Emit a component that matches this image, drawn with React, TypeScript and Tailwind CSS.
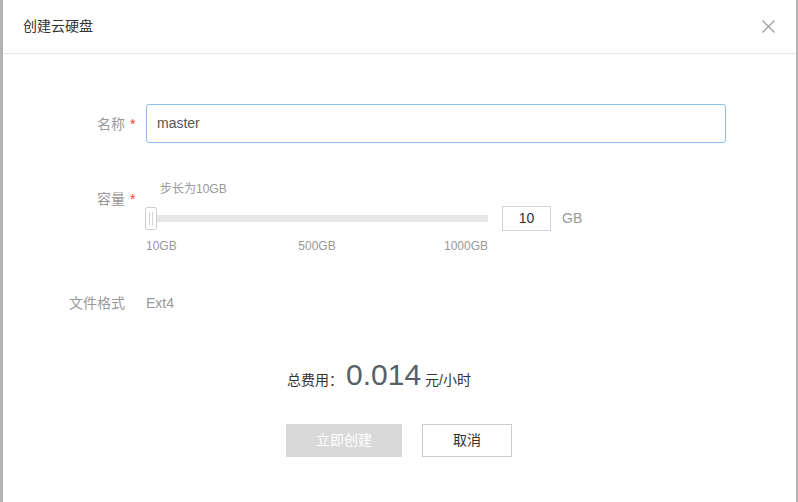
import React from "react";

const FONT = { fontFamily: '"Liberation Sans", "Noto Sans CJK SC", sans-serif' };

export default function App() {
  return (
    <div className="w-[798px] h-[502px] bg-[#b3b3b3] flex pl-[3px] pr-[2px] overflow-hidden" style={FONT}>
      <div className="flex-1 bg-white flex flex-col">
        {/* Header */}
        <div className="h-[54px] border-b border-[#e3e7ed] flex items-center justify-between pl-[20px] pr-[21px] shrink-0">
          <span className="text-[14px] text-[#333]">创建云硬盘</span>
          <svg width="13" height="13" viewBox="0 0 13 13" className="block">
            <path d="M0.5 0.5 L12.5 12.5 M12.5 0.5 L0.5 12.5" stroke="#9a9a9a" strokeWidth="1.2" fill="none" />
          </svg>
        </div>

        {/* Body */}
        <div className="flex flex-col pt-[50px]">
          {/* Name row */}
          <div className="flex items-center">
            <div className="w-[122px] text-right text-[14px] text-[#999] leading-[20px]">名称</div>
            <div className="w-[21px] pl-[5px] text-[14px] text-[#ff3b30] leading-[20px]">*</div>
            <div className="w-[580px] h-[39px] border border-[#8dbdeb] rounded-[3px] flex items-center pl-[10px] text-[14px] text-[#555]">
              master
            </div>
          </div>

          {/* Capacity row */}
          <div className="flex mt-[39px]">
            <div className="w-[122px] text-right text-[14px] text-[#999] leading-[20px] pt-[7px]">容量</div>
            <div className="w-[21px] pl-[5px] text-[14px] text-[#ff3b30] leading-[20px] pt-[7px]">*</div>
            <div className="flex flex-col">
              <div className="text-[12px] leading-[14px] text-[#999] pl-[14px]">步长为10GB</div>
              <div className="flex items-center mt-[10px] h-[25px]">
                <div className="relative w-[342px] h-[25px] flex items-center">
                  <div className="w-full h-[7px] bg-[#e6e6e6]" />
                  <div className="absolute left-[-1px] top-[1px] w-[12px] h-[23px] bg-white border border-[#cfcfcf] rounded-[2px] flex items-center justify-center gap-[2px]">
                    <div className="w-[1px] h-[13px] bg-[#d4d4d4]" />
                    <div className="w-[1px] h-[13px] bg-[#d4d4d4]" />
                  </div>
                </div>
                <div className="ml-[14px] w-[49px] h-[25px] border border-[#ccd3da] flex items-center justify-center text-[14px] text-[#333]">
                  10
                </div>
                <span className="ml-[11px] text-[14px] text-[#999]">GB</span>
              </div>
              <div className="w-[342px] grid grid-cols-3 mt-[8px] text-[12px] leading-[14px] text-[#999]">
                <span className="text-left">10GB</span>
                <span className="text-center">500GB</span>
                <span className="text-right">1000GB</span>
              </div>
            </div>
          </div>

          {/* Format row */}
          <div className="flex mt-[40px] leading-[20px] text-[14px] text-[#999]">
            <div className="w-[122px] text-right">文件格式</div>
            <div className="w-[21px]" />
            <div>Ext4</div>
          </div>

          {/* Fee + buttons */}
          <div className="flex justify-center mt-[42px] pr-[1px]">
            <div className="w-[226px] flex flex-col">
              <div className="flex items-baseline whitespace-nowrap leading-[40px] pl-[1px]">
                <span className="text-[14px] text-[#333]">总费用：</span>
                <span className="text-[30px] text-[#566067] ml-[3px]">0.014</span>
                <span className="text-[14px] text-[#333] ml-[4px]">元/小时</span>
              </div>
              <div className="flex gap-[20px] mt-[24px]">
                <div className="w-[116px] h-[33px] bg-[#d9d9d9] text-white text-[14px] flex items-center justify-center">
                  立即创建
                </div>
                <div className="w-[90px] h-[33px] border border-[#cccccc] text-[#333] text-[14px] flex items-center justify-center">
                  取消
                </div>
              </div>
            </div>
          </div>
        </div>
      </div>
    </div>
  );
}
